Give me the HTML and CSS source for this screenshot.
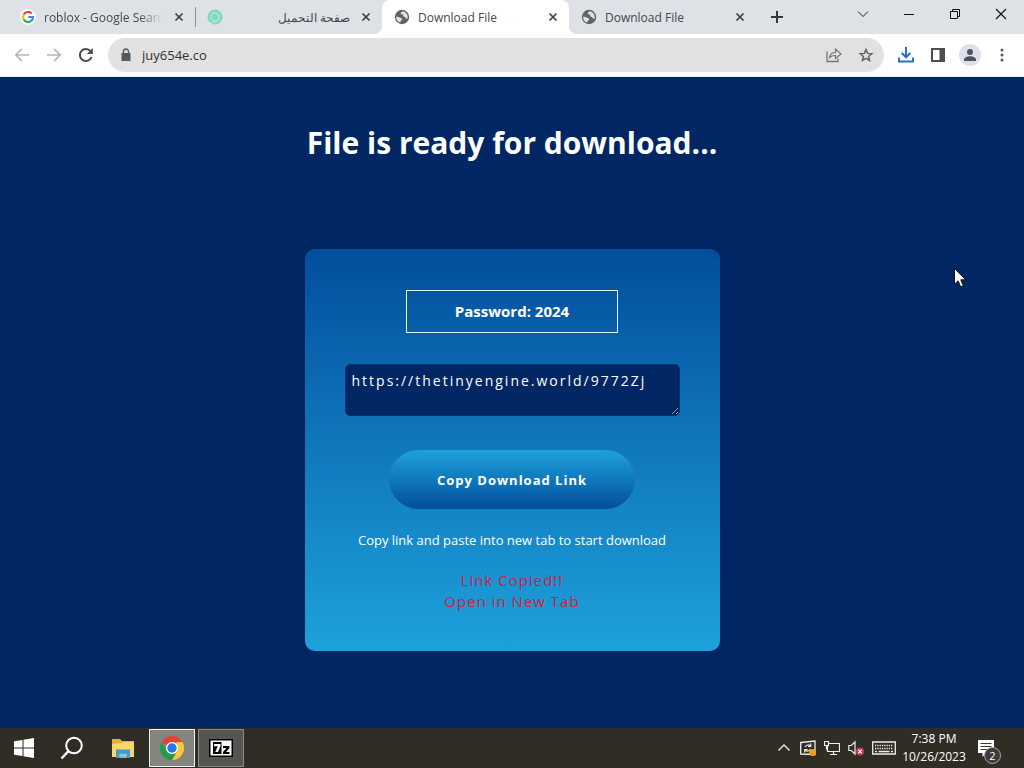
FILE: index.html
```html
<!DOCTYPE html>
<html lang="en">
<head>
<meta charset="utf-8">
<meta name="viewport" content="width=device-width, initial-scale=1">
<title>Download File</title>
<link rel="stylesheet" href="styles.css">
</head>
<body class="desktop">
<svg class="defs" aria-hidden="true">
  <symbol id="x" viewBox="0 0 16 16"><path d="M4.500 4.500l7 7m0-7l-7 7" stroke="currentColor" stroke-width="1.700" fill="none"/></symbol>
  <symbol id="globe" viewBox="0 0 16 16"><circle cx="8" cy="8" r="7.200" fill="#5f6368"/><path d="M9 2.300C7.400 3 6.500 4 6.800 5.200L9 5.600 9.300 7.600 11 8l1 1.700 1.700-.2A6 6 0 0 0 9 2.300zM2.200 7.500l3.200.8 2.800 1.500-.6 1.600-1 .5-.3 1.700A6 6 0 0 1 2.200 7.500z" fill="#dee1e6"/></symbol>
</svg>
<header class="tabstrip">
  <div class="tabs" role="tablist">
    <div class="tab" role="tab" aria-selected="false">
      <svg class="icon" viewBox="0 0 16 16"><circle cx="8" cy="8" r="8" fill="#f8f9fb"/><g fill="none" stroke-width="2.200"><path d="M11.700 4.500A5 5 0 0 0 3.700 5.500" stroke="#ea4335"/><path d="M3.700 5.500a5 5 0 0 0 0 5" stroke="#fbbc05"/><path d="M3.700 10.500a5 5 0 0 0 7.500 1.400" stroke="#34a853"/><path d="M11.200 11.900A5 5 0 0 0 13 8H8.300" stroke="#4285f4"/></g></svg>
      <span class="tab-title faded">roblox - Google Search</span>
      <button class="tab-close" aria-label="Close tab"><svg class="icon"><use href="#x"/></svg></button>
    </div>
    <div class="tab divided" role="tab" aria-selected="false">
      <svg class="icon" viewBox="0 0 16 16"><circle cx="8" cy="8" r="7.500" fill="#80d8bd"/><circle cx="8" cy="8" r="4" fill="none" stroke="#b5e9d8" stroke-width="1.300"/><path d="M3 13.500Q8 15 13 10" stroke="#b2e8d6" fill="none"/></svg>
      <span class="tab-title" lang="ar" dir="rtl">صفحة التحميل</span>
      <button class="tab-close" aria-label="Close tab"><svg class="icon"><use href="#x"/></svg></button>
    </div>
    <div class="tab active" role="tab" aria-selected="true">
      <svg class="icon"><use href="#globe"/></svg>
      <span class="tab-title">Download File</span>
      <button class="tab-close" aria-label="Close tab"><svg class="icon"><use href="#x"/></svg></button>
    </div>
    <div class="tab" role="tab" aria-selected="false">
      <svg class="icon"><use href="#globe"/></svg>
      <span class="tab-title">Download File</span>
      <button class="tab-close" aria-label="Close tab"><svg class="icon"><use href="#x"/></svg></button>
    </div>
    <button class="new-tab" aria-label="New tab"><svg class="icon" viewBox="0 0 16 16"><path d="M8 2v12M2 8h12" stroke="#33363a" stroke-width="2"/></svg></button>
  </div>
  <div class="window-controls">
    <button aria-label="Search tabs"><svg class="icon" viewBox="0 0 16 16"><path d="M3 5.500l5 5 5-5" stroke="#222" fill="none"/></svg></button>
    <button aria-label="Minimize"><svg class="icon" viewBox="0 0 16 16"><path d="M3 8.500h10" stroke="#111"/></svg></button>
    <button aria-label="Restore"><svg class="icon" viewBox="0 0 16 16"><path d="M3.500 5.500h7v7h-7zM5.500 5.500v-2h7v7h-2" stroke="#111" fill="none"/></svg></button>
    <button aria-label="Close"><svg class="icon" viewBox="0 0 16 16"><path d="M3 3l10 10M13 3L3 13" stroke="#111" stroke-width="1.200"/></svg></button>
  </div>
</header>
<nav class="toolbar" aria-label="Browser toolbar">
  <div class="nav-buttons">
    <button class="tool" aria-label="Back"><svg class="icon" viewBox="0 0 16 16"><path d="M15 8H2M8 1.800L1.800 8 8 14.200" stroke="#b4b6b9" stroke-width="1.700" fill="none"/></svg></button>
    <button class="tool" aria-label="Forward"><svg class="icon" viewBox="0 0 16 16"><path d="M1 8h13M8 1.800L14.200 8 8 14.200" stroke="#b4b6b9" stroke-width="1.700" fill="none"/></svg></button>
    <button class="tool" aria-label="Reload"><svg class="icon" viewBox="0 0 16 16"><path d="M13.500 10A6 6 0 1 1 12.500 4.200" stroke="#4a4d51" stroke-width="2" fill="none"/><path d="M14.800 1v6H8.800z" fill="#4a4d51"/></svg></button>
  </div>
  <div class="omnibox">
    <svg class="icon" viewBox="0 0 16 16"><path d="M3.500 6h9v8h-9z" fill="#55585c"/><path d="M5.500 6.500V4.500a2.500 2.500 0 0 1 5 0v2" stroke="#55585c" stroke-width="1.400" fill="none"/></svg>
    <input class="address" aria-label="Address" value="juy654e.co">
    <button class="tool" aria-label="Share"><svg class="icon" viewBox="0 0 16 16"><path d="M1 4.500v10h11v-3" stroke="#74777b" stroke-width="1.300" fill="none"/><path d="M3.500 10.500C4 7.500 6 5.500 9.500 5.500v-3.500l5.500 5-5.500 4.500V8.500C7 8.500 5 9 3.500 10.500z" stroke="#74777b" stroke-width="1.200" fill="none"/></svg></button>
    <button class="tool" aria-label="Bookmark this tab"><svg class="icon" viewBox="0 0 16 16"><path d="M8 2.500l1.600 3.900 4.200.3-3.200 2.700 1 4.100L8 11.300l-3.600 2.200 1-4.100L2.200 6.700l4.200-.3z" stroke="#5f6368" stroke-width="1.500" fill="none"/></svg></button>
  </div>
  <div class="tools">
    <button class="tool" aria-label="Downloads"><svg class="icon" viewBox="0 0 16 16"><path d="M8 0v10M3.700 6L8 10.300 12.300 6M1 10.500V14.500h14V10.500" stroke="#2a6fd0" stroke-width="2" fill="none"/></svg></button>
    <button class="tool" aria-label="Side panel"><svg class="icon" viewBox="0 0 16 16"><path d="M1 1h14v14H1z" fill="#4c4e52"/><path d="M3 3h6.500v10H3z" fill="#fff"/></svg></button>
    <button class="tool" aria-label="Profile"><svg class="avatar" viewBox="0 0 22 22"><circle cx="11" cy="11" r="11" fill="#dfe1ea"/><circle cx="11" cy="8" r="3" fill="#4d5361"/><path d="M5 17v-1.500c0-2 3-3.300 6-3.300s6 1.300 6 3.300V17z" fill="#4d5361"/></svg></button>
    <button class="tool" aria-label="Menu"><svg class="icon" viewBox="0 0 16 16"><g fill="#55585c"><circle cx="8" cy="3" r="1.500"/><circle cx="8" cy="8" r="1.500"/><circle cx="8" cy="13" r="1.500"/></g></svg></button>
  </div>
</nav>
<main class="page">
  <h1 class="headline">File is ready for download...</h1>
  <section class="card">
    <div class="password">Password: 2024</div>
    <textarea class="link" aria-label="Download link" rows="2">https://thetinyengine.world/9772Zj</textarea>
    <button class="copy">Copy Download Link</button>
    <p class="hint">Copy link and paste into new tab to start download</p>
    <p class="status" role="status">Link Copied!!<br>Open in New Tab</p>
  </section>
</main>
<footer class="taskbar">
  <div class="launchers">
    <button class="launcher" aria-label="Start"><svg class="glyph" viewBox="0 0 24 24"><path d="M2 5.200l8.500-1.300v7.600H2zM11.500 3.700L22 2v9.500H11.500zM2 12.500h8.500v7.600L2 18.800zM11.500 12.500H22V22l-10.500-1.700z" fill="#fff"/></svg></button>
    <button class="launcher" aria-label="Search"><svg class="glyph" viewBox="0 0 24 24"><circle cx="14" cy="9.500" r="7.800" stroke="#fff" stroke-width="2" fill="none"/><path d="M8.500 15.200L1.500 22.500" stroke="#fff" stroke-width="2.400"/></svg></button>
    <div class="apps">
      <button class="app" aria-label="File Explorer"><svg class="glyph" viewBox="0 0 24 24"><path d="M1 3h8l2 2h12v16H1z" fill="#e5ae38"/><path d="M1 8l9-1 2-1h11v15H1z" fill="#fad667"/><path d="M5 22v-8.500h14V22h-3.500v-4h-7v4z" fill="#3d9cd2"/><path d="M8.500 17.500h1.500V20h1v-2.500h2V20h1v-2.500h1.500V22h-7z" fill="#70bee5"/></svg></button>
      <button class="app current" aria-label="Google Chrome"><svg class="glyph" viewBox="0 0 24 24"><path d="M12 12L1.600 6A12 12 0 0 1 22.400 6H12z" fill="#e94235"/><path d="M12 12l5.200-6h5.200A12 12 0 0 1 12 24l5.200-9z" fill="#fcc934"/><path d="M1.600 6l5.200 9 5.200 3h3.500L12 24A12 12 0 0 1 1.600 6z" fill="#229a50"/><circle cx="12" cy="12" r="6" fill="#fff"/><circle cx="12" cy="12" r="4.700" fill="#2879e3"/></svg></button>
      <button class="app open" aria-label="7-Zip"><svg class="glyph" viewBox="0 0 24 24"><path d="M0 3h24v18H0z" fill="#050505"/><path d="M1.500 4.500h21v15h-21z" fill="#fff"/><path d="M4 6h8.500v12H4z" fill="#050505"/><path d="M5 8h6.500v2L9 16H6.300l2.400-5.800H5z" fill="#fff"/><path d="M14 10h6.500v2l-3.500 4h3.500v2H14v-2l3.500-4H14z" fill="#050505"/></svg></button>
    </div>
  </div>
  <div class="tray">
    <button class="tray-item" aria-label="Show hidden icons"><svg class="icon" viewBox="0 0 16 16"><path d="M2.500 10.500L8 5l5.500 5.500" stroke="#eee" stroke-width="1.300" fill="none"/></svg></button>
    <button class="tray-item" aria-label="Updates"><svg class="icon" viewBox="0 0 16 16"><path d="M.7 2.500L15 1v13.500L.7 14z" stroke="#eee" stroke-width="1.300" fill="none"/><path d="M5 7Q7.500 3.500 10.500 6M10.800 3.500v3H8M10.500 9Q8 12.500 5 10M4.700 12.500v-3h3" stroke="#eee" stroke-width="1.200" fill="none"/><circle cx="12.500" cy="12.500" r="3.500" fill="#f39b1d"/></svg></button>
    <button class="tray-item" aria-label="Network"><svg class="icon" viewBox="0 0 16 16"><path d="M4.500 3.500h11v8h-12V6M9.500 11.500v3M6 14.500h7M.5 1.500h4v4h-4zM2.500 5.500v4" stroke="#eee" stroke-width="1.200" fill="none"/></svg></button>
    <button class="tray-item" aria-label="Volume"><svg class="icon" viewBox="0 0 16 16"><path d="M.8 5.500h2.500L7 2v12l-3.700-3.500H.8z" stroke="#eee" stroke-width="1.200" fill="none"/><circle cx="12" cy="11.500" r="4" fill="#d23449"/><path d="M10.200 9.700l3.600 3.600m0-3.600l-3.600 3.600" stroke="#fff" stroke-width="1.200"/></svg></button>
    <button class="tray-item wide" aria-label="Touch keyboard"><svg class="keyboard" viewBox="0 0 24 16"><path d="M.7 2h22.600v12H.7z" stroke="#eee" stroke-width="1.300" fill="none"/><path d="M3 5.500h18M3 8.500h18" stroke="#eee" stroke-width="1.500" stroke-dasharray="1.300 1"/><path d="M3 11.500h2M6.500 11.500h11M19 11.500h2" stroke="#eee" stroke-width="1.300"/></svg></button>
    <time class="clock" datetime="2023-10-26T19:38">7:38 PM<br>10/26/2023</time>
    <button class="notifications" aria-label="2 new notifications"><svg class="glyph" viewBox="0 0 24 24"><path d="M2 4h16v13h-8l-3.500 4v-4H2z" fill="#fff"/><path d="M4.500 7.500h11M4.500 10.500h11M4.500 13.500h7" stroke="#39362d" stroke-width="1.200"/></svg><span class="count">2</span></button>
  </div>
</footer>
<svg class="cursor" viewBox="0 0 12 20" aria-hidden="true"><path d="M.5.500v15.800l3.600-3.500 2.500 6 2.700-1.100-2.500-5.900h4.900z" fill="#fff" stroke="#111"/></svg>
</body>
</html>
```
FILE: styles.css
```css
* { box-sizing: border-box; }
button, input, textarea { font: inherit; color: inherit; }
button { display: flex; align-items: center; justify-content: center; padding: 0; border: 0; background: none; }
h1, p { margin: 0; }

.desktop {
  display: flex;
  flex-direction: column;
  min-height: 100vh;
  margin: 0;
  font-family: "Open Sans", "Noto Sans", sans-serif;
  font-size: 12px;
  background: #002763;
}
.defs { position: absolute; width: 0; height: 0; }
.icon { flex: none; width: 16px; height: 16px; }
.glyph { flex: none; width: 24px; height: 24px; }
.avatar { width: 22px; height: 22px; }

.tabstrip { display: flex; justify-content: space-between; height: 34px; background: #dee1e6; color: #45484c; }
.tabs { display: flex; flex: 1; min-width: 0; padding-left: 8px; }
.tab { display: flex; flex: 0 1 187px; align-items: center; gap: 8px; min-width: 0; padding: 0 8px 0 12px; }
.tab.divided { background: linear-gradient(#8d9196, #8d9196) 0 50% / 1px 20px no-repeat; }
.tab.active { position: relative; border-radius: 8px 8px 0 0; background: #fff; }
.tab.active::before, .tab.active::after { content: ""; position: absolute; bottom: 0; width: 8px; height: 8px; }
.tab.active::before { right: 100%; background: radial-gradient(circle at 0 0, transparent 8px, #fff 8px); }
.tab.active::after { left: 100%; background: radial-gradient(circle at 100% 0, transparent 8px, #fff 8px); }
.tab-title { flex: 1; min-width: 0; overflow: hidden; white-space: nowrap; }
.tab-title.faded { mask-image: linear-gradient(to right, #000 80%, transparent); }
.tab-close { color: #3c4043; }
.new-tab { width: 28px; margin-left: 7px; }
.window-controls { display: flex; height: 28px; }
.window-controls button { width: 46px; }

.toolbar { display: flex; align-items: center; gap: 6px; height: 43px; padding: 0 6px; background: #fff; border-bottom: 1px solid #dff0f8; }
.nav-buttons, .tools { display: flex; flex: none; }
.tool { width: 32px; height: 32px; }
.omnibox { display: flex; flex: 1; align-items: center; min-width: 0; height: 34px; padding: 0 2px 0 10px; border-radius: 17px; background: #e1e1e1; }
.address { flex: 1; min-width: 0; padding: 0 8px; border: 0; outline: 0; background: none; font-size: 13px; color: #333; }

.page { display: flex; flex: 1; flex-direction: column; align-items: center; gap: 84px; padding: 44px 16px 77px; color: #fff; }
.headline { font-size: 30px; line-height: 44px; font-weight: 700; text-align: center; }
.card {
  display: flex;
  flex-direction: column;
  align-items: center;
  width: 100%;
  max-width: 415px;
  padding: 41px 40px 39px;
  border-radius: 10px;
  background: linear-gradient(#034e9c, #1da2dc);
}
.password { padding: 10px 48px; border: 1px solid #e4fbf5; font-size: 15px; line-height: 21px; font-weight: 700; }
.link {
  width: 100%;
  height: 52px;
  margin-top: 31px;
  padding: 7px 6px;
  border: 1px solid #063474;
  border-radius: 5px;
  outline: 0;
  background: #002763;
  font-size: 14px;
  line-height: 18px;
  letter-spacing: 2px;
}
.copy {
  height: 59px;
  margin-top: 34px;
  padding: 0 48px;
  border-radius: 30px;
  background: linear-gradient(#1da2dc, #034e9c);
  font-size: 13px;
  font-weight: 700;
  letter-spacing: 1px;
}
.hint { margin-top: 21px; font-size: 13px; line-height: 20px; }
.status { margin-top: 20px; font-size: 15px; line-height: 21px; letter-spacing: 1px; text-align: center; color: #d0213f; }

.taskbar { display: flex; justify-content: space-between; height: 40px; background: #302d24; color: #fff; }
.launchers, .apps, .tray { display: flex; }
.launcher { width: 48px; }
.apps { gap: 3px; padding: 1px 4px; }
.app { width: 46px; height: 38px; }
.app.current { background: #858580; border: 1px solid #f0f0ee; }
.app.open { background: #555552; border: 1px solid #8a8a87; }
.tray { align-items: center; padding-right: 16px; }
.tray-item { width: 24px; height: 40px; }
.tray-item.wide { width: 32px; }
.keyboard { width: 24px; height: 16px; }
.clock { width: 68px; line-height: 18px; text-align: center; white-space: nowrap; }
.notifications { position: relative; width: 40px; height: 40px; }
.count {
  position: absolute;
  right: 7px;
  bottom: 4px;
  width: 17px;
  height: 17px;
  border: 1px solid #aaa;
  border-radius: 50%;
  background: #3b3b3b;
  font-size: 11px;
  line-height: 15px;
  text-align: center;
}
.cursor { position: absolute; left: 954px; top: 268px; width: 12px; height: 20px; }
```
